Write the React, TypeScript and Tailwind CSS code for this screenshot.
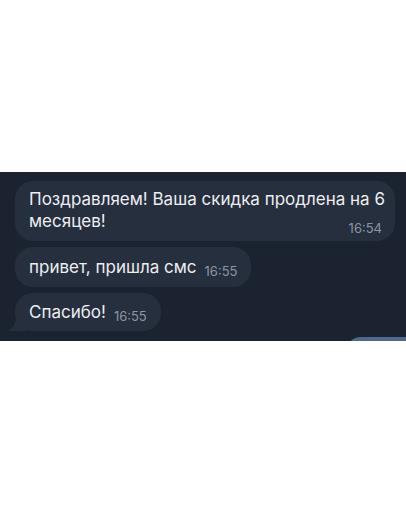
import React from 'react';

const bubble = 'bg-[#262f3d] text-[#eceef2] rounded-[18px]';

const Time: React.FC<{ t: string; className?: string }> = ({ t, className }) => (
  <span className={`text-[13px] leading-none text-[#8c95a3] ${className ?? ''}`}>{t}</span>
);

export default function App() {
  return (
    <div className="w-[406px] h-[516px] bg-white flex flex-col" style={{ fontFamily: 'Inter, "Noto Sans", sans-serif' }}>
      <div className="h-[172px] shrink-0" />
      <div className="relative h-[169px] shrink-0 overflow-hidden bg-[#1b2230] px-[15px] pt-[9px] flex flex-col items-start gap-[6px]">
        <div className={`${bubble} w-[380px] pl-[14px] pr-[13px] pt-[7px] pb-[9px] text-[17px] leading-[22px]`}>
          <div className="whitespace-nowrap">Поздравляем! Ваша скидка продлена на 6</div>
          <div className="flex items-end justify-between">
            <span>месяцев!</span>
            <Time t="16:54" className="mb-[-3px]" />
          </div>
        </div>

        <div className={`${bubble} flex items-end pl-[14px] pr-[14px] pt-[9px] pb-[9px] text-[17px] leading-[22px]`}>
          <span>привет, пришла смс</span>
          <Time t="16:55" className="ml-[8px]" />
        </div>

        <div className="relative">
          <svg className="absolute left-[-8px] bottom-0" width="20" height="18" viewBox="0 0 20 18">
            <path d="M20 0 L20 18 L0 18 C6 16 9 11 10 0 Z" fill="#262f3d" />
          </svg>
          <div className={`${bubble} relative flex items-end pl-[14px] pr-[14px] pt-[8px] pb-[8px] text-[17px] leading-[22px]`}>
            <span>Спасибо!</span>
            <Time t="16:55" className="ml-[8px]" />
          </div>
        </div>

        {/* edge of an outgoing bubble peeking in below */}
        <div className="absolute right-[-15px] bottom-[-30px] w-[76px] h-[34px] rounded-[16px] bg-[#4c6a8f]" />
      </div>
    </div>
  );
}
